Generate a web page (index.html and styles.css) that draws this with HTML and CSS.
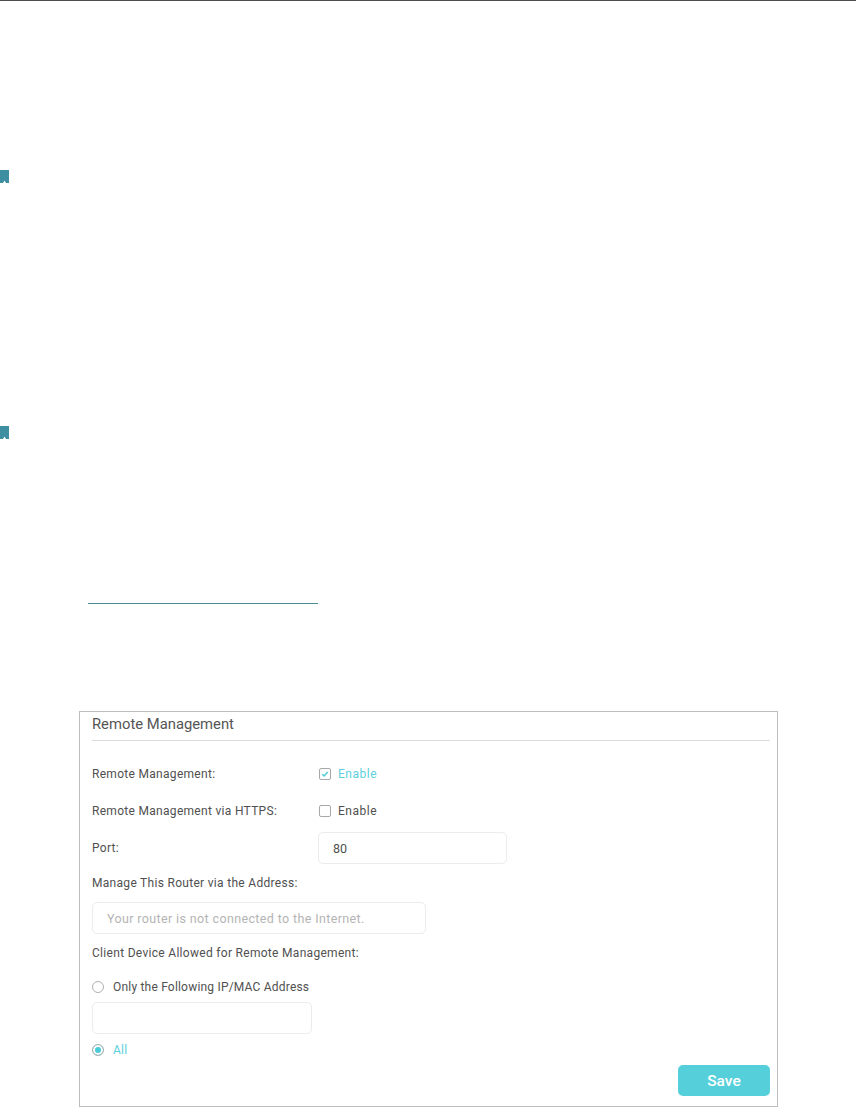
FILE: index.html
```html
<!DOCTYPE html>
<html lang="en">
<head>
<meta charset="utf-8">
<title>Remote Management</title>
<link rel="stylesheet" href="styles.css">
</head>
<body>
<div class="page">
  <div class="top-rule"></div>
  <svg class="marker marker-first" viewBox="0 0 9 13" aria-hidden="true"><path d="M0 0H9V13L6 13L4.5 10.5L3 13H0Z"/></svg>
  <svg class="marker marker-second" viewBox="0 0 9 13" aria-hidden="true"><path d="M0 0H9V13L6 13L4.5 10.5L3 13H0Z"/></svg>
  <div class="link-rule"></div>
  <section class="panel">
    <h2 class="panel-title">Remote Management</h2>
    <div class="row row-first">
      <span class="label">Remote Management:</span>
      <span class="choice on">
        <span class="check"><svg viewBox="0 0 12 12" aria-hidden="true"><path d="M2.8 6.2L5 8.4L9.2 3.6"/></svg></span>
        Enable
      </span>
    </div>
    <div class="row row-second">
      <span class="label">Remote Management via HTTPS:</span>
      <span class="choice"><span class="check"></span>Enable</span>
    </div>
    <div class="row row-port">
      <span class="label">Port:</span>
      <div class="field field-port">80</div>
    </div>
    <div class="label stacked stacked-address">Manage This Router via the Address:</div>
    <div class="field field-address">Your router is not connected to the Internet.</div>
    <div class="label stacked stacked-client">Client Device Allowed for Remote Management:</div>
    <div class="choice radio-first"><span class="radio"></span>Only the Following IP/MAC Address</div>
    <div class="field field-ip"></div>
    <div class="choice on radio-second"><span class="radio selected"></span>All</div>
    <div class="actions"><button class="save" type="button">Save</button></div>
  </section>
</div>
</body>
</html>
```
FILE: styles.css
```css
* { box-sizing: border-box; }
html, body { margin: 0; padding: 0; background: #fff; }
body {
  font-family: Roboto, "Liberation Sans", sans-serif;
  font-size: 12px;
  color: #505050;
}
.page { width: 856px; height: 1107px; overflow: hidden; display: flex; flex-direction: column; }
.top-rule { height: 1px; background: #4d4d4d; }
.marker { display: block; width: 9px; height: 13px; fill: #3f8fa3; }
.marker-first { margin-top: 169px; }
.marker-second { margin-top: 243px; }
.link-rule { width: 230px; height: 1px; margin: 164px 0 0 88px; background: #4a8a94; }
.panel {
  width: 699px;
  height: 396px;
  margin: 107px 0 0 79px;
  padding: 0 7px 0 12px;
  border: 1px solid #bdbdbd;
  display: flex;
  flex-direction: column;
}
.panel-title {
  margin: 0;
  height: 29px;
  padding-top: 3px;
  font-size: 14.8px;
  line-height: 18px;
  font-weight: 400;
  color: #555;
  border-bottom: 1px solid #dcdcdc;
}
.row { display: flex; align-items: center; }
.label { width: 226px; letter-spacing: 0.3px; }
.stacked { width: auto; line-height: 16px; }
.row-first { height: 16px; margin-top: 25px; }
.row-second { height: 16px; margin-top: 21px; }
.row-port { height: 32px; margin-top: 13px; }
.stacked-address { margin-top: 11px; }
.stacked-client { margin-top: 11px; }
.choice { display: flex; align-items: center; gap: 7px; letter-spacing: 0.2px; line-height: 16px; }
.row .choice { letter-spacing: 0.5px; }
.on { color: #5bd0dc; }
.check {
  width: 12px;
  height: 12px;
  margin-left: 1px;
  border: 1px solid #a8a8a8;
  border-radius: 2px;
  display: block;
}
.check svg { display: block; width: 10px; height: 10px; fill: none; stroke: #4acbd8; stroke-width: 1.8; }
.radio {
  width: 12px;
  height: 12px;
  margin-right: 2px;
  border: 1px solid #b0b0b0;
  border-radius: 50%;
  display: block;
  flex: none;
}
.radio.selected { background: #4acbd8; box-shadow: inset 0 0 0 2px #fff; }
.field {
  border: 1px solid #ececec;
  border-radius: 5px;
  padding-left: 14px;
  display: flex;
  align-items: center;
  height: 32px;
  font-size: 12.5px;
}
.field-port { width: 189px; }
.field-address { width: 334px; margin-top: 11px; color: #b4b4b4; letter-spacing: 0.37px; }
.field-ip { width: 220px; margin-top: 7px; }
.radio-first { margin-top: 18px; }
.radio-second { margin-top: 8px; }
.actions { display: flex; justify-content: flex-end; margin-top: 7px; }
.save {
  width: 92px;
  height: 31px;
  border: 0;
  border-radius: 5px;
  background: #55cfda;
  color: #fff;
  font: 500 15.5px Roboto, "Liberation Sans", sans-serif;
  padding: 0;
}
```
